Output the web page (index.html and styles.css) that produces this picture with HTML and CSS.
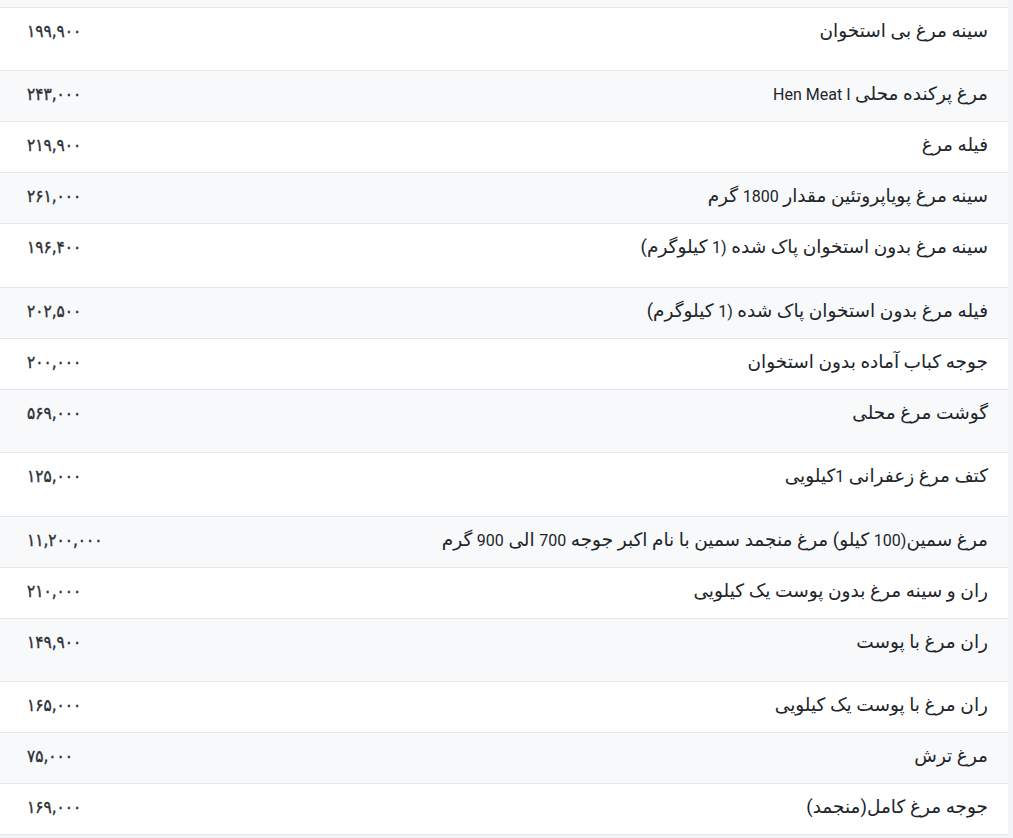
FILE: index.html
```html
<!DOCTYPE html>
<html lang="fa" dir="rtl">
<head>
    <meta charset="UTF-8">
    <meta name="viewport" content="width=device-width, initial-scale=1.0">
    <title>قیمت مرغ</title>
    <link rel="stylesheet" href="styles.css">
</head>
<body>

<div class="panel">
    <table class="price-table">
        <tbody>
            <tr class="tall"><td class="name">سینه مرغ بی استخوان</td><td class="price">۱۹۹,۹۰۰</td></tr>
            <tr><td class="name">مرغ پرکنده محلی <span class="en">Hen Meat I</span></td><td class="price">۲۴۳,۰۰۰</td></tr>
            <tr><td class="name">فیله مرغ</td><td class="price">۲۱۹,۹۰۰</td></tr>
            <tr><td class="name">سینه مرغ پویاپروتئین مقدار <span class="en">1800</span> گرم</td><td class="price">۲۶۱,۰۰۰</td></tr>
            <tr class="taller"><td class="name">سینه مرغ بدون استخوان پاک شده <span class="en">(1</span> کیلوگرم)</td><td class="price">۱۹۶,۴۰۰</td></tr>
            <tr><td class="name">فیله مرغ بدون استخوان پاک شده <span class="en">(1</span> کیلوگرم)</td><td class="price">۲۰۲,۵۰۰</td></tr>
            <tr><td class="name">جوجه کباب آماده بدون استخوان</td><td class="price">۲۰۰,۰۰۰</td></tr>
            <tr class="tall"><td class="name">گوشت مرغ محلی</td><td class="price">۵۶۹,۰۰۰</td></tr>
            <tr class="taller"><td class="name">کتف مرغ زعفرانی <span class="en">1</span>کیلویی</td><td class="price">۱۲۵,۰۰۰</td></tr>
            <tr><td class="name">مرغ سمین<span class="en">(100</span> کیلو) مرغ منجمد سمین با نام اکبر جوجه <span class="en">700</span> الی <span class="en">900</span> گرم</td><td class="price">۱۱,۲۰۰,۰۰۰</td></tr>
            <tr><td class="name">ران و سینه مرغ بدون پوست یک کیلویی</td><td class="price">۲۱۰,۰۰۰</td></tr>
            <tr class="tall"><td class="name">ران مرغ با پوست</td><td class="price">۱۴۹,۹۰۰</td></tr>
            <tr><td class="name">ران مرغ با پوست یک کیلویی</td><td class="price">۱۶۵,۰۰۰</td></tr>
            <tr><td class="name">مرغ ترش</td><td class="price">۷۵,۰۰۰</td></tr>
            <tr><td class="name">جوجه مرغ کامل(منجمد)</td><td class="price">۱۶۹,۰۰۰</td></tr>
        </tbody>
    </table>
</div>

</body>
</html>
```

FILE: styles.css
```css
body {
    margin: 0;
    font-family: Roboto, 'DejaVu Sans', sans-serif;
    background-color: #f1f3f5;
    color: #212529;
}
.panel {
    margin-right: 5px;
    padding-top: 7px;
    background-color: #f8f9fa;
}
.price-table {
    width: 100%;
    border-collapse: collapse;
    border-top: 1px solid #e5e7eb;
    background-color: #fff;
}
.price-table tr {
    border-bottom: 1px solid #e5e7eb;
}
.price-table tr:nth-child(even) {
    background-color: #f8f9fa;
}
.price-table td {
    vertical-align: top;
    padding: 11px 0 15px;
    height: 24px;
    line-height: 24px;
}
.price-table tr.tall td {
    height: 36px;
}
.price-table tr.taller td {
    height: 37px;
}
.name {
    text-align: right;
    padding-right: 20px !important;
    font-size: 18.5px;
}
.name .en {
    font-size: 16px;
    line-height: 1;
}
.price {
    width: 160px;
    text-align: left;
    padding-left: 27px !important;
    font-family: 'DejaVu Sans Condensed', 'DejaVu Sans', sans-serif;
    font-size: 17px;
    -webkit-text-stroke: 0.35px #2b2f33;
    color: #2b2f33;
    white-space: nowrap;
}
```
